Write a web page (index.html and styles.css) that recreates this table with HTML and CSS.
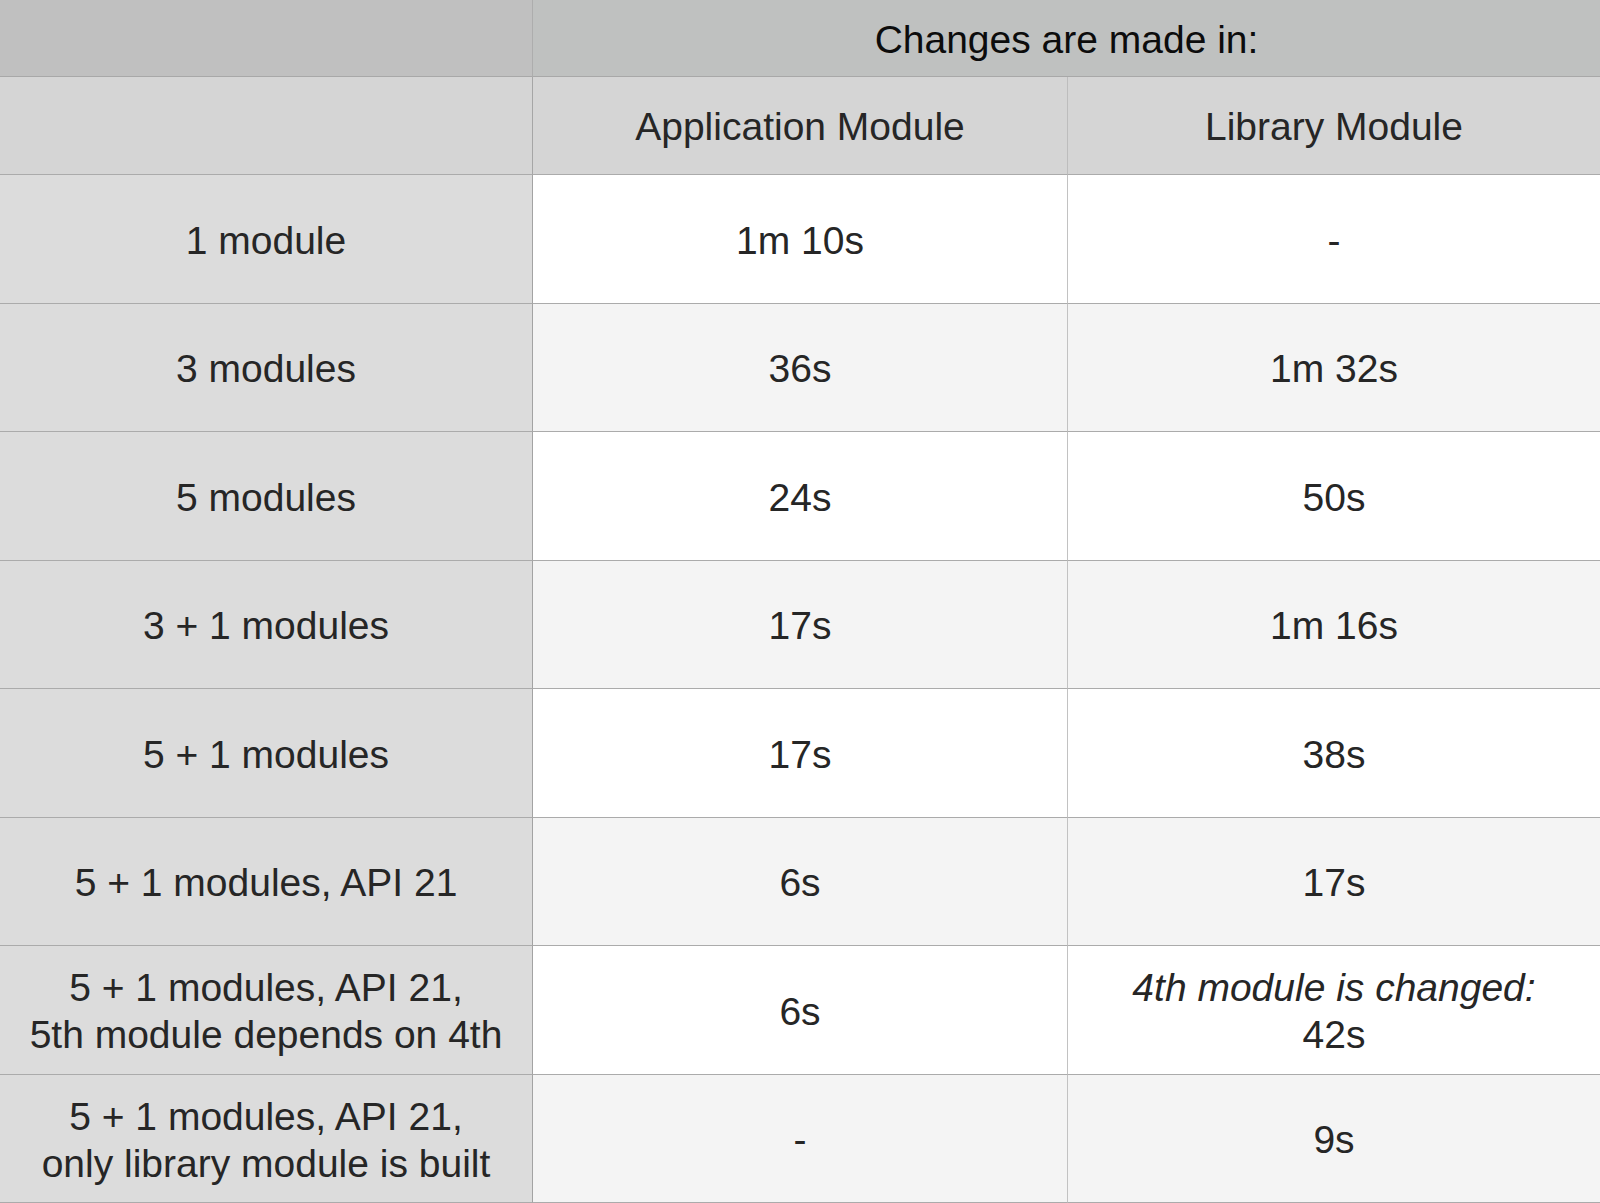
FILE: index.html
```html
<!DOCTYPE html>
<html>
<head>
<meta charset="utf-8">
<link rel="stylesheet" href="styles.css">
</head>
<body>
<div class="table">
  <div class="cell top corner"></div>
  <div class="cell top title"><span class="txt">Changes are made in:</span></div>

  <div class="cell head first"></div>
  <div class="cell head"><span class="txt">Application Module</span></div>
  <div class="cell head last"><span class="txt">Library Module</span></div>

  <div class="cell label"><span class="txt">1 module</span></div>
  <div class="cell odd"><span class="txt">1m 10s</span></div>
  <div class="cell odd last"><span class="txt">-</span></div>

  <div class="cell label"><span class="txt">3 modules</span></div>
  <div class="cell even"><span class="txt">36s</span></div>
  <div class="cell even last"><span class="txt">1m 32s</span></div>

  <div class="cell label"><span class="txt">5 modules</span></div>
  <div class="cell odd"><span class="txt">24s</span></div>
  <div class="cell odd last"><span class="txt">50s</span></div>

  <div class="cell label"><span class="txt">3 + 1 modules</span></div>
  <div class="cell even"><span class="txt">17s</span></div>
  <div class="cell even last"><span class="txt">1m 16s</span></div>

  <div class="cell label"><span class="txt">5 + 1 modules</span></div>
  <div class="cell odd"><span class="txt">17s</span></div>
  <div class="cell odd last"><span class="txt">38s</span></div>

  <div class="cell label"><span class="txt">5 + 1 modules, API 21</span></div>
  <div class="cell even"><span class="txt">6s</span></div>
  <div class="cell even last"><span class="txt">17s</span></div>

  <div class="cell label"><span class="txt">5 + 1 modules, API 21,<br>5th module depends on 4th</span></div>
  <div class="cell odd"><span class="txt">6s</span></div>
  <div class="cell odd last"><span class="txt"><em class="note">4th module is changed:</em><br>42s</span></div>

  <div class="cell label"><span class="txt">5 + 1 modules, API 21,<br>only library module is built</span></div>
  <div class="cell even"><span class="txt">-</span></div>
  <div class="cell even last"><span class="txt">9s</span></div>
</div>
</body>
</html>
```

FILE: styles.css
```css
html, body {
  margin: 0;
  padding: 0;
  background: #ffffff;
}

.table {
  display: grid;
  grid-template-columns: 533px 535px 532px;
  grid-template-rows: 77px 98px repeat(8, 128.5px);
  width: 1600px;
  height: 1203px;
  font-family: "Liberation Sans", Arial, sans-serif;
  font-size: 39px;
  line-height: 47px;
  color: #262626;
}

.cell {
  box-sizing: border-box;
  display: flex;
  align-items: center;
  justify-content: center;
  text-align: center;
  padding-top: 3px;
  border-bottom: 1px solid #ababab;
  border-right: 1px solid #a9a9a9;
}

.txt {
  display: block;
}

.cell.last {
  border-right: none;
}

.top {
  background: #c0c0c0;
  border-bottom: 1px solid #a8a8a8;
}

.top.corner {
  border-right: 1px solid #adadad;
}

.top.title {
  grid-column: 2 / 4;
  background: #bfc1c0;
  border-right: none;
  padding-top: 3px;
  color: #0c0c0c;
  font-size: 39px;
}

.head {
  background: #d5d5d5;
  border-right-color: #bdbdbd;
  padding-top: 2px;
}

.head.first {
  border-right-color: #a6a6a6;
}

.label {
  background: #dcdcdc;
  border-right-color: #a3a3a3;
}

.odd {
  background: #ffffff;
  border-right-color: #c2c2c2;
}

.even {
  background: #f4f4f4;
  border-right-color: #c2c2c2;
}

.note {
  font-style: italic;
}
```
